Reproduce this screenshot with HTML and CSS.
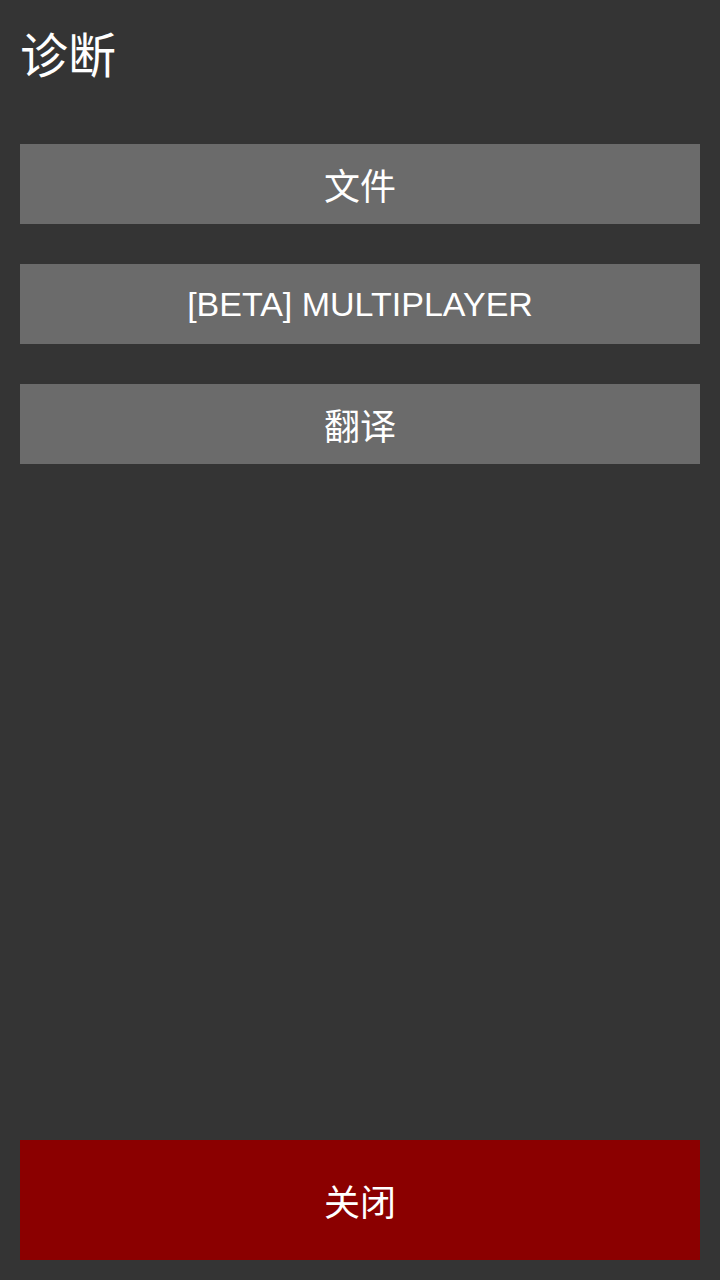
FILE: index.html
```html
<!DOCTYPE html>
<html lang="zh">
<head>
<meta charset="utf-8">
<link rel="stylesheet" href="styles.css">
</head>
<body>
<div class="screen">
  <h1 class="title">诊断</h1>
  <div class="menu">
    <div class="btn cjk">文件</div>
    <div class="btn">[BETA] MULTIPLAYER</div>
    <div class="btn cjk">翻译</div>
  </div>
  <div class="close cjk">关闭</div>
</div>
</body>
</html>
```
FILE: styles.css
```css
html, body {
  margin: 0;
  padding: 0;
  background: #343434;
}
.screen {
  box-sizing: border-box;
  width: 720px;
  height: 1280px;
  padding: 28px 20px 20px;
  display: flex;
  flex-direction: column;
  font-family: "Liberation Sans", "Noto Sans CJK SC", sans-serif;
  color: #ffffff;
}
.title {
  margin: 0 0 68px 0;
  font-family: "Noto Sans CJK SC", sans-serif;
  font-weight: 400;
  font-size: 48px;
  line-height: 48px;
}
.menu {
  display: flex;
  flex-direction: column;
  gap: 40px;
}
.btn {
  height: 80px;
  background: #6b6b6b;
  display: flex;
  align-items: center;
  justify-content: center;
  font-size: 34px;
  font-weight: 400;
}
.cjk {
  font-family: "Noto Sans CJK SC", sans-serif;
  font-size: 36px;
  line-height: 1;
}
.close {
  margin-top: auto;
  height: 120px;
  background: #8b0000;
  display: flex;
  align-items: center;
  justify-content: center;
}
```
